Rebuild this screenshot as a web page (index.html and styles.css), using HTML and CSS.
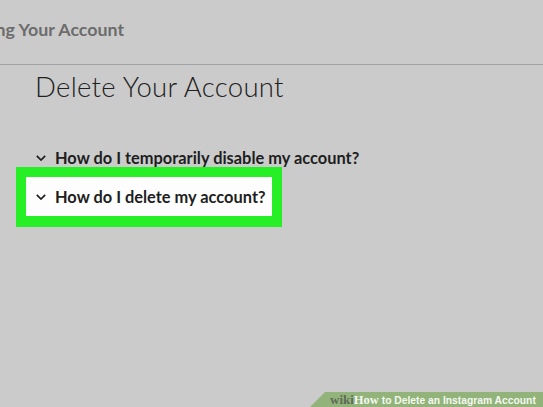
FILE: index.html
```html
<!DOCTYPE html>
<html lang="en">

<head>
  <meta charset="UTF-8">
  <title>Delete Your Account</title>
  <link rel="stylesheet" href="styles.css">
</head>

<body>
  <header class="topbar">
    <span class="crumb">Managing Your Account</span>
  </header>

  <main class="help">
    <h1 class="title">Delete Your Account</h1>
    <ul class="faq">
      <li class="question">
        <svg class="chevron" viewBox="0 0 10 6" width="10" height="6">
          <path d="M0.8 0.8 L5 5 L9.2 0.8" />
        </svg>
        <span>How do I temporarily disable my account?</span>
      </li>
      <li class="question highlight">
        <svg class="chevron" viewBox="0 0 10 6" width="10" height="6">
          <path d="M0.8 0.8 L5 5 L9.2 0.8" />
        </svg>
        <span>How do I delete my account?</span>
      </li>
    </ul>
  </main>

  <div class="badge">
    <span class="wiki">wiki</span><span class="how">How</span> to Delete an Instagram Account
  </div>
</body>

</html>
```

FILE: styles.css
```css
body {
  margin: 0;
  padding: 0;
  width: 543px;
  height: 407px;
  overflow: hidden;
  background-color: #cbcbcb;
  font-family: 'Lato', 'Liberation Sans', sans-serif;
  color: #1e1e1e;
  position: relative;
}

.topbar {
  height: 64px;
  border-bottom: 1px solid #a2a2a2;
  overflow: hidden;
}

.crumb {
  display: block;
  margin-left: -63px;
  padding-top: 18px;
  font-size: 17.8px;
  font-weight: 700;
  color: #6c6c6c;
  white-space: nowrap;
}

.help {
  padding-left: 35px;
}

.title {
  margin: 0;
  padding-top: 5px;
  font-size: 27.5px;
  font-weight: 300;
  letter-spacing: 0.3px;
  color: #202020;
}

.faq {
  list-style: none;
  margin: 0;
  padding: 0;
  padding-top: 44px;
}

.question {
  display: flex;
  align-items: center;
  gap: 9px;
  font-size: 16.4px;
  font-weight: 700;
  height: 20px;
  padding-left: 1px;
}

.chevron {
  fill: none;
  stroke: #1e1e1e;
  stroke-width: 1.7;
  margin-top: 1px;
}

.highlight {
  width: 236px;
  height: 39px;
  margin-top: 0;
  margin-left: -19px;
  padding-left: 10px;
  background-color: #fdfdfd;
  border: 10px solid #26ef26;
  border-bottom-width: 11px;
}

.badge {
  position: absolute;
  right: 0;
  bottom: 0;
  width: 233px;
  height: 15px;
  padding-left: 20px;
  box-sizing: border-box;
  background-color: #92b47a;
  clip-path: polygon(15px 0, 100% 0, 100% 100%, 0 100%);
  font-family: 'Liberation Sans', sans-serif;
  font-size: 10.3px;
  font-weight: 700;
  line-height: 16px;
  color: #f4f8f0;
  white-space: nowrap;
}

.wiki {
  font-family: 'Liberation Serif', serif;
  font-size: 13px;
  color: #5f6a58;
}

.how {
  font-family: 'Liberation Serif', serif;
  font-size: 12.5px;
}
```
